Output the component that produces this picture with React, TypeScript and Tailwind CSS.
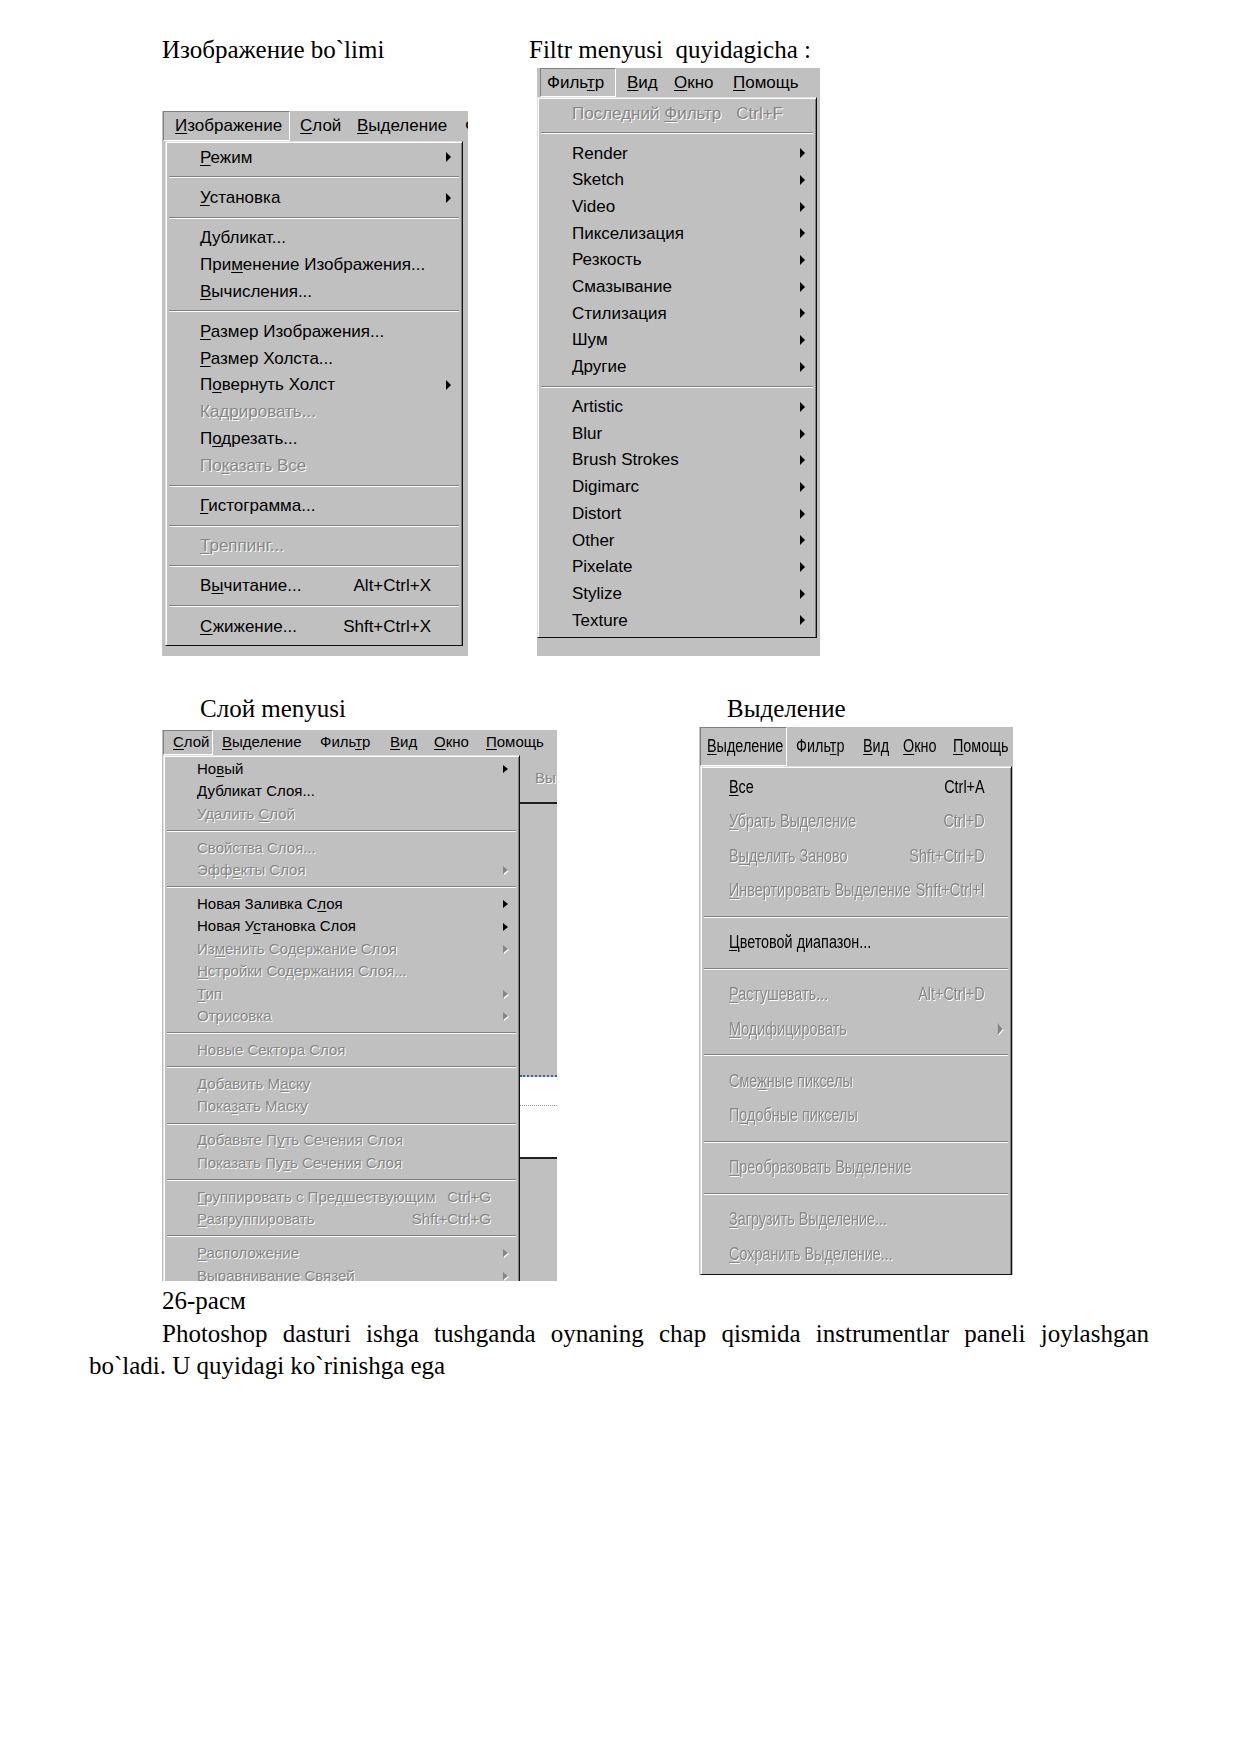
type It = { t: string; sub?: boolean; k?: string; off?: boolean } | "-";

type Cfg = {
  text: string;
  row: string;
  sep: string;
  pl: string;
  col: string;
  arrow: string;
  cond?: boolean;
};

type Mb = { t: string; w: string; active?: boolean };

const dis = "text-[#868686] [text-shadow:1px_1px_0_#ffffff]";

function Label({ t }: { t: string }) {
  const i = t.indexOf("&");
  if (i < 0) return <>{t}</>;
  return (
    <>
      {t.slice(0, i)}
      <u className="decoration-1 underline-offset-[2px]">{t[i + 1]}</u>
      {t.slice(i + 2)}
    </>
  );
}

function MenuBar({ items, h, text, cond }: { items: Mb[]; h: string; text: string; cond?: boolean }) {
  return (
    <div className={`flex items-stretch pl-[1px] overflow-hidden whitespace-nowrap text-black ${h} ${text}`}>
      {items.map((m, i) => (
        <div
          key={i}
          className={`flex items-center shrink-0 ${m.w} ${
            m.active ? "border border-t-[#808080] border-l-[#808080] border-r-white border-b-white" : ""
          }`}
        >
          <span className={cond ? "inline-block origin-left scale-x-[0.8]" : ""}>
            <Label t={m.t} />
          </span>
        </div>
      ))}
    </div>
  );
}

function Dropdown({ items, c, className }: { items: It[]; c: Cfg; className: string }) {
  return (
    <div
      className={`border-t border-l border-t-[#dfdfdf] border-l-[#dfdfdf] border-r border-r-[#101010] shadow-[inset_1px_1px_0_#ffffff,inset_-1px_0_0_#808080] bg-[#c0c0c0] ${className}`}
    >
      {items.map((it, i) =>
        it === "-" ? (
          <div key={i} className={`flex flex-col justify-center px-[3px] ${c.sep}`}>
            <div className="h-px bg-[#808080]" />
            <div className="h-px bg-white" />
          </div>
        ) : (
          <div key={i} className={`flex items-center ${c.row} ${c.text} ${it.off ? dis : "text-black"}`}>
            {/* condensed menus are laid out 125% wide and squeezed back */}
            <div
              className={`flex items-center whitespace-nowrap ${c.pl} ${
                c.cond ? "w-[125%] shrink-0 origin-left scale-x-[0.8]" : "w-full"
              }`}
            >
              <span>
                <Label t={it.t} />
              </span>
              <span className="flex-1" />
              {it.k && <span>{it.k}</span>}
              <span className={`flex justify-end shrink-0 ${c.col}`}>
                {it.sub && (
                  <span
                    className={`w-0 h-0 border-y-transparent ${c.arrow} ${
                      it.off ? "border-l-[#868686] drop-shadow-[1px_1px_0_#ffffff]" : "border-l-black"
                    }`}
                  />
                )}
              </span>
            </div>
          </div>
        )
      )}
    </div>
  );
}

const p1: It[] = [
  { t: "&Режим", sub: true },
  "-",
  { t: "&Установка", sub: true },
  "-",
  { t: "&Дубликат..." },
  { t: "При&менение Изображения..." },
  { t: "&Вычисления..." },
  "-",
  { t: "&Размер Изображения..." },
  { t: "&Размер Холста..." },
  { t: "П&овернуть Холст", sub: true },
  { t: "Кад&рировать...", off: true },
  { t: "П&одрезать..." },
  { t: "По&казать Все", off: true },
  "-",
  { t: "&Гистограмма..." },
  "-",
  { t: "&Треппинг...", off: true },
  "-",
  { t: "В&ычитание...", k: "Alt+Ctrl+X" },
  "-",
  { t: "&Сжижение...", k: "Shft+Ctrl+X" },
];

const p2: It[] = [
  { t: "Последний &Фильтр", k: "Ctrl+F", off: true },
  "-",
  ...["Render", "Sketch", "Video", "Пикселизация", "Резкость", "Смазывание", "Стилизация", "Шум", "Другие"].map(
    (t) => ({ t, sub: true })
  ),
  "-",
  ...["Artistic", "Blur", "Brush Strokes", "Digimarc", "Distort", "Other", "Pixelate", "Stylize", "Texture"].map(
    (t) => ({ t, sub: true })
  ),
];

const p3: It[] = [
  { t: "Но&вый", sub: true },
  { t: "&Дубликат Слоя..." },
  { t: "Удалить &Слой", off: true },
  "-",
  { t: "Свойства Слоя...", off: true },
  { t: "Эфф&екты Слоя", off: true, sub: true },
  "-",
  { t: "Новая Заливка С&лоя", sub: true },
  { t: "Новая У&становка Слоя", sub: true },
  { t: "Из&менить Содержание Слоя", off: true, sub: true },
  { t: "&Нстройки Содержания Слоя...", off: true },
  { t: "&Тип", off: true, sub: true },
  { t: "Отрисовка", off: true, sub: true },
  "-",
  { t: "Новые Сектора Слоя", off: true },
  "-",
  { t: "Добавить М&аску", off: true },
  { t: "Пока&зать Маску", off: true },
  "-",
  { t: "Добавьте П&уть Сечения Слоя", off: true },
  { t: "Показать Пу&ть Сечения Слоя", off: true },
  "-",
  { t: "&Группировать с Предшествующим", k: "Ctrl+G", off: true },
  { t: "&Разгруппировать", k: "Shft+Ctrl+G", off: true },
  "-",
  { t: "&Расположение", off: true, sub: true },
  { t: "Выравнивание Связей", off: true, sub: true },
];

const p4: It[] = [
  { t: "&Все", k: "Ctrl+A" },
  { t: "&Убрать Выделение", k: "Ctrl+D", off: true },
  { t: "В&ыделить Заново", k: "Shft+Ctrl+D", off: true },
  { t: "&Инвертировать Выделение", k: "Shft+Ctrl+I", off: true },
  "-",
  { t: "&Цветовой диапазон..." },
  "-",
  { t: "&Растушевать...", k: "Alt+Ctrl+D", off: true },
  { t: "&Модифицировать", sub: true, off: true },
  "-",
  { t: "Сме&жные пикселы", off: true },
  { t: "П&одобные пикселы", off: true },
  "-",
  { t: "&Преобразовать Выделение", off: true },
  "-",
  { t: "&Загрузить Выделение...", off: true },
  { t: "&Сохранить Выделение...", off: true },
];

const ui = "font-['Liberation_Sans',Arial,sans-serif]";

export default function App() {
  return (
    <div className="w-[1240px] h-[1754px] bg-white overflow-hidden text-black font-['Liberation_Serif','Times_New_Roman',serif] text-[25px]">
      {/* row 1: Изображение + Фильтр */}
      <div className="flex pt-[36px]">
        <div className="ml-[162px] w-[306px]">
          <p className="leading-[28px] whitespace-nowrap">Изображение bo`limi</p>
          <div className={`mt-[47px] w-[306px] h-[545px] bg-[#c0c0c0] overflow-hidden ${ui}`}>
            <MenuBar
              h="h-[30px]"
              text="text-[17px]"
              items={[
                { t: "&Изображение", w: "w-[127px] pl-[11px]", active: true },
                { t: "&Слой", w: "w-[57px] pl-[10px]" },
                { t: "&Выделение", w: "w-[113px] pl-[10px]" },
                { t: "Фильтр", w: "w-[60px] pl-[5px]" },
              ]}
            />
            <Dropdown
              className="ml-[3px] w-[298px] border-b border-b-[#101010] pt-[2px] pb-[5px]"
              items={p1}
              c={{
                text: "text-[17px]",
                row: "h-[26.8px]",
                sep: "h-[13.4px]",
                pl: "pl-[34px]",
                col: "w-[31px] pr-[11px]",
                arrow: "border-y-[5px] border-l-[5px]",
              }}
            />
          </div>
        </div>

        <div className="ml-[61px]">
          <p className="leading-[28px] whitespace-nowrap">Filtr menyusi{"\u00a0"} quyidagicha :</p>
          <div className={`mt-[4px] ml-[8px] w-[283px] h-[588px] bg-[#c0c0c0] overflow-hidden ${ui}`}>
            <MenuBar
              h="h-[29px]"
              text="text-[17px]"
              items={[
                { t: "Филь&тр", w: "ml-[2px] w-[76px] pl-[6px]", active: true },
                { t: "&Вид", w: "w-[50px] pl-[11px]" },
                { t: "&Окно", w: "w-[57px] pl-[8px]" },
                { t: "&Помощь", w: "w-[96px] pl-[10px]" },
              ]}
            />
            <Dropdown
              className="w-[280px] border-b border-b-[#101010] pt-[2px] pb-[3px]"
              items={p2}
              c={{
                text: "text-[17px]",
                row: "h-[26.7px]",
                sep: "h-[13.3px]",
                pl: "pl-[34px]",
                col: "w-[33px] pr-[11px]",
                arrow: "border-y-[5px] border-l-[5px]",
              }}
            />
          </div>
        </div>
      </div>

      {/* row 2: Слой + Выделение */}
      <div className="flex mt-[39px]">
        <div className="ml-[162px] w-[395px]">
          <p className="pl-[38px] leading-[28px] whitespace-nowrap">Слой menyusi</p>
          <div className={`mt-[7px] w-[395px] h-[551px] bg-[#c0c0c0] overflow-hidden ${ui}`}>
            <MenuBar
              h="h-[25px]"
              text="text-[15px]"
              items={[
                { t: "&Слой", w: "w-[50px] pl-[9px]", active: true },
                { t: "&Выделение", w: "w-[99px] pl-[9px]" },
                { t: "Филь&тр", w: "w-[70px] pl-[8px]" },
                { t: "&Вид", w: "w-[44px] pl-[8px]" },
                { t: "&Окно", w: "w-[52px] pl-[8px]" },
                { t: "&Помощь", w: "w-[79px] pl-[8px]" },
              ]}
            />
            <div className="flex">
              <Dropdown
                className="ml-[1px] w-[357px] h-[526px] pt-[2px]"
                items={p3}
                c={{
                  text: "text-[15px]",
                  row: "h-[22.4px]",
                  sep: "h-[11.6px]",
                  pl: "pl-[33px]",
                  col: "w-[28px] pr-[11px]",
                  arrow: "border-y-[4px] border-l-[5px]",
                }}
              />
              <div className="flex-1 flex flex-col h-[526px]">
                <div className={`h-[47px] flex items-center pl-[15px] text-[15px] ${dis}`}>Вы</div>
                <div className="h-[2px] bg-[#202020]" />
                <div className="h-[271px]" />
                <div className="h-[2px] border-t-2 border-dotted border-t-[#3b5bd6]" />
                <div className="h-[28px] bg-white" />
                <div className="h-[1px] border-t border-dotted border-t-[#6f8fe8] bg-white" />
                <div className="h-[51px] bg-white" />
                <div className="h-[2px] bg-[#202020]" />
                <div className="flex-1" />
              </div>
            </div>
          </div>
        </div>

        <div className="ml-[142px]">
          <p className="pl-[28px] leading-[28px] whitespace-nowrap">Выделение</p>
          <div className={`mt-[4px] w-[314px] h-[548px] bg-[#c0c0c0] overflow-hidden ${ui}`}>
            <MenuBar
              h="h-[39px]"
              text="text-[18px]"
              cond
              items={[
                { t: "&Выделение", w: "w-[87px] pl-[6px]", active: true },
                { t: "Филь&тр", w: "w-[69px] pl-[9px]" },
                { t: "&Вид", w: "w-[40px] pl-[7px]" },
                { t: "&Окно", w: "w-[50px] pl-[7px]" },
                { t: "&Помощь", w: "w-[67px] pl-[7px]" },
              ]}
            />
            <Dropdown
              className="ml-[1px] w-[312px] border-b border-b-[#101010] pt-[3px] pb-[2px]"
              items={p4}
              c={{
                text: "text-[18px]",
                row: "h-[34.5px]",
                sep: "h-[17.5px]",
                pl: "pl-[35px]",
                col: "w-[33px] pr-[11px]",
                arrow: "border-y-[6px] border-l-[6px]",
                cond: true,
              }}
            />
          </div>
        </div>
      </div>

      <p className="ml-[162px] mt-[4px] leading-[32.5px]">26-расм</p>
      <p className="ml-[89px] w-[1060px] indent-[73px] text-justify leading-[32.5px]">
        Photoshop dasturi ishga tushganda oynaning chap qismida instrumentlar paneli joylashgan bo`ladi. U
        quyidagi ko`rinishga ega
      </p>
    </div>
  );
}
